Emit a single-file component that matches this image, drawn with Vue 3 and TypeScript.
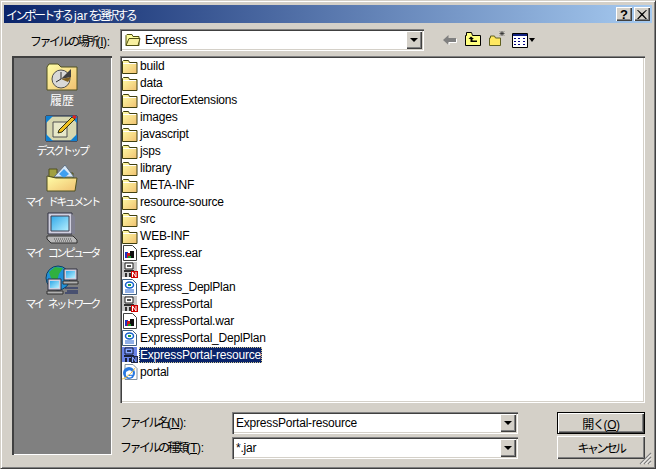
<script setup lang="ts">
type Kind = 'folder' | 'ear' | 'server' | 'plan' | 'ie'
interface Row { name: string; kind: Kind; selected?: boolean }
const folders = ['build', 'data', 'DirectorExtensions', 'images', 'javascript', 'jsps', 'library', 'META-INF', 'resource-source', 'src', 'WEB-INF']
const rows: Row[] = [
  ...folders.map((name): Row => ({ name, kind: 'folder' })),
  { name: 'Express.ear', kind: 'ear' },
  { name: 'Express', kind: 'server' },
  { name: 'Express_DeplPlan', kind: 'plan' },
  { name: 'ExpressPortal', kind: 'server' },
  { name: 'ExpressPortal.war', kind: 'ear' },
  { name: 'ExpressPortal_DeplPlan', kind: 'plan' },
  { name: 'ExpressPortal-resource', kind: 'server', selected: true },
  { name: 'portal', kind: 'ie' }
]
const places = [
  { id: 'history', label: '履歴' },
  { id: 'desktop', label: 'デスクトップ' },
  { id: 'docs', label: 'マイ ドキュメント' },
  { id: 'computer', label: 'マイ コンピュータ' },
  { id: 'network', label: 'マイ ネットワーク' }
]
</script>

<template>
  <div class="window">
    <svg class="defs" width="0" height="0" aria-hidden="true">
      <defs>
        <linearGradient id="fy" x1="0" y1="0" x2="1" y2="1">
          <stop offset="0" stop-color="#ffffa8" />
          <stop offset="1" stop-color="#f0c070" />
        </linearGradient>
        <linearGradient id="scr" x1="0" y1="0" x2="1" y2="1">
          <stop offset="0" stop-color="#30a8e8" />
          <stop offset="1" stop-color="#b8f0ff" />
        </linearGradient>
        <symbol id="i-folder" viewBox="0 0 16 16">
          <path d="M.5 15.500V3.500l1-1h5l1 2h7.500v11z" fill="url(#fy)" stroke="#404010" />
          <path d="M1 5.500h13" stroke="#fff" />
        </symbol>
        <symbol id="i-ear" viewBox="0 0 16 16">
          <path d="M1.500 .5h9l4 4v11h-13z" fill="#fff" stroke="#404040" />
          <path d="M3 7h3v6H3z" fill="#2030c0" />
          <path d="M5 8h3v5H5z" fill="#d01818" />
          <path d="M8 6h4v7H8z" fill="#101010" />
          <path d="M6 11h3v2H6z" fill="#18a030" />
        </symbol>
        <symbol id="i-server" viewBox="0 0 16 16">
          <path d="M0 0h15v15H0z" fill="#c8c8c8" />
          <path d="M3 1h8v6H3z" fill="#fff" stroke="#202020" />
          <path d="M5 3h4v2H5z" fill="#505050" />
          <path d="M2 8h10v2H2zM3 11h2v4H3zM7 11h2v4H7z" fill="#303030" />
          <path d="M9 9h7v7H9z" fill="#d00000" />
          <path d="M10.500 15v-5l3.500 5v-5" fill="none" stroke="#fff" />
        </symbol>
        <symbol id="i-plan" viewBox="0 0 16 16">
          <path d="M.5 .5h10l4 4v11H.5z" fill="#fff" stroke="#406080" />
          <ellipse cx="7.500" cy="6" rx="4" ry="3" fill="#fff" stroke="#1060d0" stroke-width="1.500" />
          <path d="M6 5h3v2H6z" fill="#20a040" />
          <path d="M3 11h9M3 13h9" stroke="#2060d0" />
        </symbol>
        <symbol id="i-ie" viewBox="0 0 16 16">
          <path d="M3 .5h8l4 4v11H3z" fill="#fff" stroke="#8090a0" />
          <circle cx="7" cy="9" r="6" fill="#2878e0" />
          <path d="M4 8.500h6v1.500H4.500M9.500 12c-2 1.500-5 .5-5-2 0-3 4-4 5-1.500" fill="none" stroke="#fff" stroke-width="1.500" />
          <path d="M0 15c3 0 10-6 13-11" fill="none" stroke="#f0c040" />
        </symbol>
      </defs>
    </svg>

    <header class="titlebar">
      <span class="title">インポートする<span class="lat tl">jar</span>を選択する</span>
      <button class="cap q">?</button>
      <button class="cap x">
        <svg width="10" height="9" viewBox="0 0 10 9"><path d="M1 0l4 3.500L9 0h1L6 4.500l4 4.500H8.500L5 5.500 1.500 9H0l4-4.500L0 0z" fill="#000" /></svg>
      </button>
    </header>

    <div class="toprow">
      <label class="look">ファイルの場所<span class="lat">(<u>I</u>):</span></label>
      <div class="combo wide">
        <svg class="ico" width="16" height="14" viewBox="0 0 16 14">
          <path d="M1 12.500V2.500l1-1h5l1 2h6v9z" fill="#ffffa0" stroke="#505010" />
          <path d="M1 12.500l3-7h11l-2 7z" fill="#f8f0a0" stroke="#505010" />
        </svg>
        <span class="val">Express</span>
        <span class="drop"><i></i></span>
      </div>
      <div class="tools">
        <svg width="15" height="12" viewBox="0 0 15 12"><path d="M6.500 1v3H14v4H6.500v3L1 6z" fill="#808080" /><path d="M7 11l0-2.500h7.500V5" fill="none" stroke="#fff" /></svg>
        <svg width="16" height="14" viewBox="0 0 16 14"><path d="M.5 13.500V3.500h1v-3h5l1 3h8v10z" fill="#ffff80" stroke="#000" /><path d="M6 4.500L3.500 7H5.500v3H12V8.500H7.500V7H9z" fill="#000" /></svg>
        <svg width="17" height="15" viewBox="0 0 17 15"><path d="M.5 14.500V7h1V5h4l1 2h5v7.500z" fill="#ffe860" stroke="#606020" /><path d="M13 0v5M10.500 2.500h5M11 .5l4 4M15 .5l-4 4" stroke="#303030" stroke-width=".8" /></svg>
        <span class="views">
          <svg width="16" height="15" viewBox="0 0 16 15"><path d="M.5 .5h15v14H.5z" fill="#fff" stroke="#000" /><path d="M1 1h14v2H1z" fill="#102080" /><path d="M2 5h2v1H2zM6 5h2v1H6zM11 5h2v1h-2zM2 8h2v1H2zM6 8h2v1H6zM11 8h2v1h-2zM2 11h2v1H2zM6 11h2v1H6zM11 11h2v1h-2z" fill="#000080" /></svg>
          <i></i>
        </span>
      </div>
    </div>

    <div class="body">
      <nav class="places">
        <div v-for="p in places" :key="p.id" class="place">
          <svg v-if="p.id === 'history'" width="32" height="28" viewBox="0 0 32 28">
            <path d="M1 27V4l2-3h9l3 3h16v23z" fill="url(#fy)" stroke="#505020" />
            <circle cx="15" cy="16" r="9" fill="#d8d8d8" stroke="#505050" />
            <path d="M15 16L25 6v8z" fill="#404040" />
            <path d="M15 16l10-2-3 5z" fill="#806020" />
            <path d="M15 9v7l-5 3" stroke="#303030" fill="none" />
          </svg>
          <svg v-else-if="p.id === 'desktop'" width="34" height="28" viewBox="0 0 34 28">
            <path d="M1 2h31v25H1z" fill="#d8d8b0" stroke="#102040" />
            <path d="M1 2h7l-7 7zM32 2v7l-7-7zM1 27v-7l7 7zM32 27h-7l7-7z" fill="#1080d0" />
            <path d="M8 8h14v15H8z" fill="#e8e8c8" stroke="#505050" />
            <path d="M14 16L27 3l3 2-13 13-4 1z" fill="#f0c020" stroke="#303010" />
            <path d="M27 3l2-2 3 2-2 2z" fill="#e02020" />
          </svg>
          <svg v-else-if="p.id === 'docs'" width="32" height="28" viewBox="0 0 32 28">
            <path d="M3 12V4h8v4h16v6z" fill="#a0a040" stroke="#505020" />
            <path d="M8 12L19 0l9 12z" fill="#d8e8f8" stroke="#607080" />
            <path d="M13 9l5-5 5 5-5 4z" fill="#40a0f0" />
            <path d="M1 26V11l9 2h21l-2 13z" fill="url(#fy)" stroke="#505020" />
          </svg>
          <svg v-else-if="p.id === 'computer'" width="32" height="32" viewBox="0 0 32 32">
            <path d="M2 1h24v21H2z" fill="#d0d0e0" stroke="#303040" />
            <path d="M5 4h18v15H5z" fill="url(#scr)" stroke="#404050" />
            <path d="M26 2l3 3v17h-3z" fill="#808090" />
            <path d="M1 24h26l4 4v3H5l-4-4z" fill="#b8b8b8" stroke="#303030" />
            <path d="M8 27h18M9 29h18" stroke="#505050" stroke-dasharray="1 1" />
          </svg>
          <svg v-else width="34" height="30" viewBox="0 0 34 30">
            <circle cx="13" cy="13" r="12" fill="#2090d8" stroke="#104060" />
            <path d="M4 7l6-5 8 1-4 6-2 7-6-3z" fill="#30b040" />
            <path d="M19 4h13v11H19z" fill="#d0d0e0" stroke="#303040" />
            <path d="M21 6h9v7h-9z" fill="url(#scr)" />
            <path d="M18 16h15v3H18z" fill="#b0b0b0" stroke="#303030" />
            <path d="M3 14h13v11H3z" fill="#d0d0e0" stroke="#303040" />
            <path d="M5 16h9v7H5z" fill="url(#scr)" />
            <path d="M2 26h16v3H2z" fill="#b0b0b0" stroke="#303030" />
            <path d="M20 23h13M22 26h11M20 28h13" stroke="#102060" />
          </svg>
          <span class="plabel" :class="{ kanji: p.id === 'history' }">{{ p.label }}</span>
        </div>
      </nav>

      <main class="main">
        <div class="list">
          <div v-for="r in rows" :key="r.name" class="row" :class="{ sel: r.selected }">
            <svg class="ri" width="16" height="16"><use :href="'#i-' + r.kind" /></svg>
            <span class="rname">{{ r.name }}</span>
          </div>
        </div>

        <div class="form">
          <div class="fields">
            <div class="field">
              <label class="flabel">ファイル名<span class="lat">(<u>N</u>):</span></label>
              <div class="combo"><span class="val">ExpressPortal-resource</span><span class="drop"><i></i></span></div>
            </div>
            <div class="field">
              <label class="flabel">ファイルの種類<span class="lat">(<u>T</u>):</span></label>
              <div class="combo"><span class="val">*.jar</span><span class="drop"><i></i></span></div>
            </div>
          </div>
          <div class="btns">
            <button class="btn def">開く<span class="lat">(<u>O</u>)</span></button>
            <button class="btn cancel">キャンセル</button>
          </div>
        </div>
      </main>
    </div>

    <svg class="grip" width="13" height="13" viewBox="0 0 13 13">
      <path d="M12 1L1 12M12 5L5 12M12 9L9 12" stroke="#808080" stroke-width="1.200" />
      <path d="M12 2.500L2.500 12M12 6.500L6.500 12M12 10.500L10.500 12" stroke="#fff" />
    </svg>
  </div>
</template>

<style>
html, body { margin: 0; padding: 0; background: #d4d0c8; }
</style>

<style scoped>
.window {
  position: relative;
  width: 656px;
  height: 469px;
  box-sizing: border-box;
  background: #d4d0c8;
  padding: 4px;
  border-top: 1px solid #d4d0c8;
  border-left: 1px solid #d4d0c8;
  border-right: 1px solid #404040;
  border-bottom: 1px solid #404040;
  box-shadow: inset 1px 1px 0 #fff, inset -1px -1px 0 #808080;
  font: 12px "Liberation Sans", "Noto Sans CJK JP", sans-serif;
  color: #000;
  overflow: hidden;
}
.defs { display: block; }
.lat { letter-spacing: -.4px; }
.titlebar {
  height: 18px;
  margin: 0 -1px 0 -1px;
  display: flex;
  align-items: center;
  padding: 0 2px 0 2px;
  background: linear-gradient(90deg, #0a246a, #a6caf0);
  color: #fff;
}
.title { flex: 1; font-size: 12px; letter-spacing: -2.7px; white-space: nowrap; }
.tl { letter-spacing: 0; margin: 0 1px 0 3px; }
.cap {
  width: 16px;
  height: 14px;
  padding: 0;
  margin: 0;
  border: 0;
  display: flex;
  align-items: center;
  justify-content: center;
  background: #d4d0c8;
  box-shadow: inset 1px 1px 0 #fff, inset -1px -1px 0 #404040, inset -2px -2px 0 #808080;
  font: bold 13px "Liberation Sans", sans-serif;
  color: #000;
}
.q { margin-right: 2px; }
.toprow {
  display: flex;
  align-items: center;
  margin-top: 6px;
  height: 22px;
}
.look {
  width: 115px;
  flex: none;
  box-sizing: border-box;
  padding-left: 25px;
  white-space: nowrap;
  letter-spacing: -2.5px;
}
.combo {
  box-sizing: border-box;
  height: 22px;
  display: flex;
  align-items: center;
  background: #fff;
  padding-left: 2px;
  box-shadow: inset 1px 1px 0 #808080, inset 2px 2px 0 #404040, inset -1px -1px 0 #fff, inset -2px -2px 0 #d4d0c8;
  width: 286px;
}
.wide { width: 304px; padding-left: 5px; flex: none; }
.ico { margin-right: 4px; flex: none; }
.val { flex: 1; letter-spacing: -.2px; padding-left: 2px; white-space: nowrap; }
.wide .val { padding-left: 0; }
.drop {
  width: 16px;
  height: 18px;
  margin-right: 2px;
  flex: none;
  display: flex;
  align-items: center;
  justify-content: center;
  background: #d4d0c8;
  box-shadow: inset 1px 1px 0 #fff, inset -1px -1px 0 #404040, inset -2px -2px 0 #808080;
}
.drop i, .views i {
  width: 0;
  height: 0;
  border-left: 4px solid transparent;
  border-right: 4px solid transparent;
  border-top: 4px solid #000;
}
.tools {
  display: flex;
  align-items: center;
  gap: 8px;
  margin-left: 18px;
}
.tools > svg:nth-child(2) { margin-left: 0; margin-top: -3px; }
.tools > svg:nth-child(3) { margin-top: -3px; }
.views { display: flex; align-items: flex-start; gap: 1px; margin-left: -2px; }
.views i { border-left-width: 3px; border-right-width: 3px; margin-top: 5px; }
.body {
  display: flex;
  align-items: flex-start;
  gap: 8px;
  margin-top: 5px;
  margin-left: 7px;
}
.places {
  width: 100px;
  height: 399px;
  flex: none;
  box-sizing: border-box;
  background: #808080;
  box-shadow: inset 1px 1px 0 #404040, inset 2px 2px 0 #404040, inset -1px -1px 0 #fff;
  display: flex;
  flex-direction: column;
  align-items: center;
  padding-top: 2px;
}
.place {
  height: 51px;
  display: flex;
  flex-direction: column;
  align-items: center;
  justify-content: flex-end;
  flex: none;
}
.place:nth-child(2) { height: 50px; }
.place svg { flex: none; margin-bottom: 1px; }
.place:first-child svg { margin-bottom: 2px; }
.plabel {
  color: #fff;
  font-size: 11px;
  line-height: 16px;
  white-space: nowrap;
  letter-spacing: -2.5px;
  word-spacing: 5px;
}
.plabel.kanji { font-size: 12px; letter-spacing: 0; }
.main { width: 525px; flex: none; display: flex; flex-direction: column; }
.list {
  box-sizing: border-box;
  height: 347px;
  flex: none;
  background: #fff;
  padding: 1px 0 0 2px;
  box-shadow: inset 1px 1px 0 #808080, inset 2px 2px 0 #404040, inset -1px -1px 0 #fff, inset -2px -2px 0 #d4d0c8;
  display: flex;
  flex-direction: column;
}
.row {
  height: 17.05px;
  display: flex;
  align-items: center;
  flex: none;
}
.ri { flex: none; }
.rname {
  margin-left: 1px;
  padding: 0 1px;
  line-height: 16px;
  letter-spacing: -.2px;
  white-space: nowrap;
}
.sel .rname {
  background: #0a246a;
  color: #fff;
  outline: 1px dotted #d4c890;
  outline-offset: -1px;
}
.sel .ri { filter: brightness(.55) sepia(1) hue-rotate(190deg) saturate(3); }
.form { display: flex; margin-top: 9px; }
.fields { width: 399px; display: flex; flex-direction: column; gap: 3px; }
.field { display: flex; align-items: center; }
.flabel { width: 112px; flex: none; letter-spacing: -2.5px; white-space: nowrap; margin-bottom: 4px; }
.btns { margin-left: 38px; display: flex; flex-direction: column; gap: 2px; }
.btn {
  width: 88px;
  height: 22px;
  padding: 0;
  background: #d4d0c8;
  border: 0;
  font: 12px "Liberation Sans", "Noto Sans CJK JP", sans-serif;
  letter-spacing: -1.4px;
  color: #000;
  box-shadow: inset 1px 1px 0 #fff, inset -1px -1px 0 #404040, inset -2px -2px 0 #808080;
}
.cancel { letter-spacing: -2.6px; height: 23px; }
.def {
  outline: 1px solid #000;
  outline-offset: -1px;
  box-shadow: inset 2px 2px 0 #fff, inset -2px -2px 0 #404040, inset -3px -3px 0 #808080;
}
.grip { position: absolute; right: 3px; bottom: 3px; }
</style>
